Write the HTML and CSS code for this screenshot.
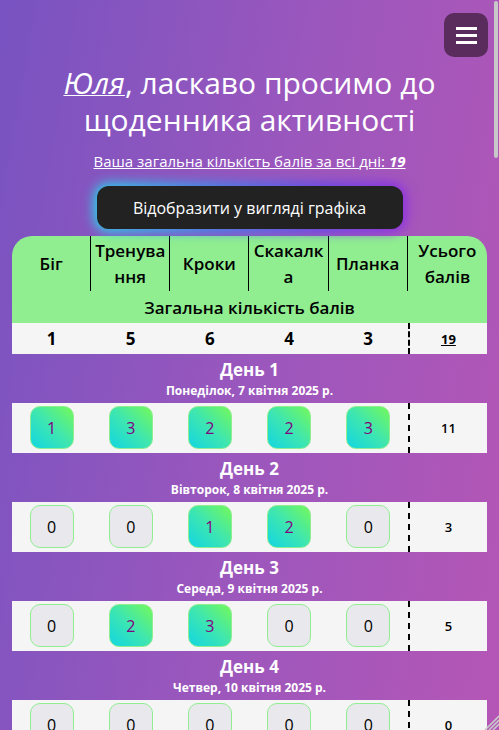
FILE: index.html
```html
<!DOCTYPE html>
<html lang="uk">
<head>
<meta charset="utf-8">
<title>Щоденник активності</title>
<link rel="stylesheet" href="styles.css">
</head>
<body>
<button class="menu-btn" aria-label="Меню">
  <span class="bar"></span><span class="bar"></span><span class="bar"></span>
</button>

<header class="hero">
  <h1><a class="name" href="#">Юля</a>, ласкаво просимо до<br>щоденника активності</h1>
  <p class="total"><a href="#">Ваша загальна кількість балів за всі дні: <b><i>19</i></b></a></p>
  <button class="chart-btn">Відобразити у вигляді графіка</button>
</header>

<table class="diary">
  <thead>
    <tr class="head-row">
      <th>Біг</th><th>Тренування</th><th>Кроки</th><th>Скакалка</th><th>Планка</th><th>Усього балів</th>
    </tr>
    <tr><th colspan="6" class="sum-title">Загальна кількість балів</th></tr>
  </thead>
  <tbody>
    <tr class="sum-row">
      <td>1</td><td>5</td><td>6</td><td>4</td><td>3</td><td class="all"><u>19</u></td>
    </tr>

    <tr class="day-head"><td colspan="6"><div class="day-title">День 1</div><div class="day-date">Понеділок, 7 квітня 2025 р.</div></td></tr>
    <tr class="day-row">
      <td><span class="box on">1</span></td><td><span class="box on">3</span></td><td><span class="box on">2</span></td><td><span class="box on">2</span></td><td><span class="box on">3</span></td><td class="all">11</td>
    </tr>

    <tr class="day-head"><td colspan="6"><div class="day-title">День 2</div><div class="day-date">Вівторок, 8 квітня 2025 р.</div></td></tr>
    <tr class="day-row">
      <td><span class="box">0</span></td><td><span class="box">0</span></td><td><span class="box on">1</span></td><td><span class="box on">2</span></td><td><span class="box">0</span></td><td class="all">3</td>
    </tr>

    <tr class="day-head"><td colspan="6"><div class="day-title">День 3</div><div class="day-date">Середа, 9 квітня 2025 р.</div></td></tr>
    <tr class="day-row">
      <td><span class="box">0</span></td><td><span class="box on">2</span></td><td><span class="box on">3</span></td><td><span class="box">0</span></td><td><span class="box">0</span></td><td class="all">5</td>
    </tr>

    <tr class="day-head"><td colspan="6"><div class="day-title">День 4</div><div class="day-date">Четвер, 10 квітня 2025 р.</div></td></tr>
    <tr class="day-row">
      <td><span class="box">0</span></td><td><span class="box">0</span></td><td><span class="box">0</span></td><td><span class="box">0</span></td><td><span class="box">0</span></td><td class="all">0</td>
    </tr>

    <tr class="day-head"><td colspan="6"><div class="day-title">День 5</div><div class="day-date">П'ятниця, 11 квітня 2025 р.</div></td></tr>
    <tr class="day-row">
      <td><span class="box">0</span></td><td><span class="box">0</span></td><td><span class="box">0</span></td><td><span class="box">0</span></td><td><span class="box">0</span></td><td class="all">0</td>
    </tr>

    <tr class="day-head"><td colspan="6"><div class="day-title">День 6</div><div class="day-date">Субота, 12 квітня 2025 р.</div></td></tr>
    <tr class="day-row">
      <td><span class="box">0</span></td><td><span class="box">0</span></td><td><span class="box">0</span></td><td><span class="box">0</span></td><td><span class="box">0</span></td><td class="all">0</td>
    </tr>

    <tr class="day-head"><td colspan="6"><div class="day-title">День 7</div><div class="day-date">Неділя, 13 квітня 2025 р.</div></td></tr>
    <tr class="day-row">
      <td><span class="box">0</span></td><td><span class="box">0</span></td><td><span class="box">0</span></td><td><span class="box">0</span></td><td><span class="box">0</span></td><td class="all">0</td>
    </tr>
  </tbody>
</table>

<div class="scroll-thumb"></div>
<svg class="grip" width="16" height="16" viewBox="0 0 16 16" aria-hidden="true">
  <path d="M2 16 L16 2 M6 16 L16 6 M10 16 L16 10" stroke="#c9c9c9" stroke-width="1.6" fill="none"/>
</svg>
</body>
</html>
```

FILE: styles.css
```css
html {
  scrollbar-width: none;
}
html::-webkit-scrollbar {
  display: none;
}
body {
  margin: 0;
  min-height: 100vh;
  font-family: "Open Sans", "Noto Sans", sans-serif;
  color: #fff;
  background: linear-gradient(100deg, #7853c1 0%, #9a57bd 50%, #b556b6 100%) fixed;
}

.menu-btn {
  position: absolute;
  top: 13px;
  right: 11px;
  width: 44px;
  height: 44px;
  border: 0;
  border-radius: 10px;
  background: #5a2c5d;
  display: flex;
  flex-direction: column;
  align-items: center;
  justify-content: center;
  gap: 4px;
  padding: 0;
}
.menu-btn .bar {
  display: block;
  width: 21px;
  height: 3px;
  background: #fff;
}

.hero {
  text-align: center;
  padding-top: 64px;
}
.hero h1 {
  margin: 0;
  font-size: 30px;
  font-weight: 400;
  line-height: 37px;
}
.hero .name {
  color: #fff;
  font-style: italic;
  text-decoration: underline;
  text-decoration-thickness: 1px;
}
.total {
  margin: 13px 0 0;
  font-size: 15px;
  line-height: 20px;
}
.total a {
  color: #fff;
  text-decoration: underline;
  text-decoration-thickness: 1px;
}

.chart-btn {
  position: relative;
  display: block;
  margin: 15px auto 0;
  width: 306px;
  height: 43px;
  border: 0;
  border-radius: 12px;
  background: #222;
  color: #fff;
  font-family: inherit;
  font-size: 16px;
  z-index: 0;
}
.chart-btn::before {
  content: "";
  position: absolute;
  inset: -3px;
  border-radius: 15px;
  background: linear-gradient(90deg, #22dcea, #3a86ec 40%, #5a4cec 70%, #8e2ce6);
  filter: blur(6px);
  z-index: -2;
}
.chart-btn::after {
  content: "";
  position: absolute;
  inset: 0;
  border-radius: 12px;
  background: #222;
  z-index: -1;
}

.diary {
  margin: 7px 12px 0;
  width: calc(100% - 24px);
  table-layout: fixed;
  border-spacing: 0;
  color: #000;
  text-align: center;
}
.head-row th {
  height: 55px;
  padding: 0 1px;
  background: #90ee90;
  font-size: 17px;
  font-weight: 600;
  line-height: 26px;
  word-break: break-all;
  border-right: 1px solid #000;
}
.head-row th:first-child {
  border-top-left-radius: 20px;
}
.head-row th:last-child {
  border-right: 0;
  border-top-right-radius: 20px;
  word-break: normal;
}
.sum-title {
  height: 32px;
  padding: 0;
  background: #90ee90;
  font-size: 17px;
  font-weight: 600;
}

.sum-row td {
  height: 31px;
  padding: 0;
  background: #f5f5f5;
  font-size: 17px;
  font-weight: 700;
}
.sum-row .all {
  font-size: 13px;
}
.all {
  border-left: 2px dashed #000;
}

.day-head td {
  padding: 5px 0 3px;
  color: #fff;
  font-weight: 700;
}
.day-title {
  font-size: 17px;
  line-height: 22px;
}
.day-date {
  font-size: 12px;
  line-height: 19px;
}

.day-row td {
  padding: 3px 0 4px;
  background: #f5f5f5;
}
.day-row .all {
  font-size: 13px;
  font-weight: 600;
}
.box {
  box-sizing: border-box;
  display: flex;
  align-items: center;
  justify-content: center;
  width: 44px;
  height: 43px;
  margin: 0 auto;
  border: 1px solid #90ee90;
  border-radius: 10px;
  background: #e9e8ed;
  font-size: 16px;
  color: #000;
}
.box.on {
  background: linear-gradient(to top right, #12d6e2, #3ee6b0 50%, #74f85a);
  color: #800080;
}

.scroll-thumb {
  position: fixed;
  top: 1px;
  right: 1px;
  width: 4px;
  height: 157px;
  border-radius: 2px;
  background: #c8c8c8;
}
.grip {
  position: fixed;
  right: 0;
  bottom: 0;
}
```
